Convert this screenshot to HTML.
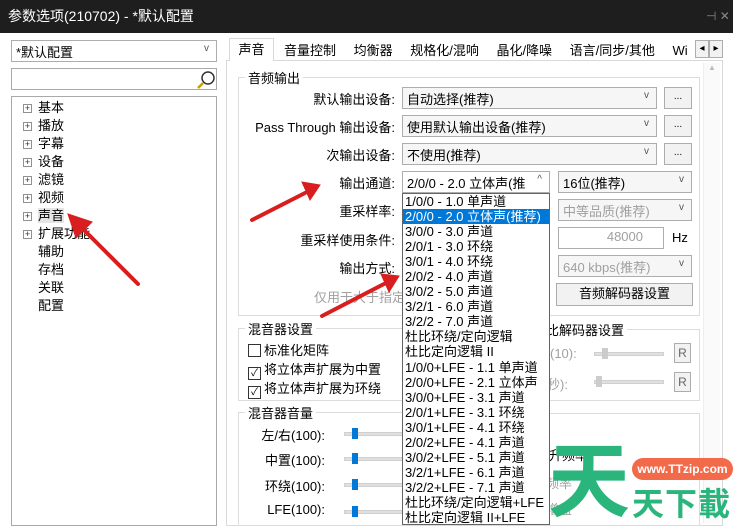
<!DOCTYPE html>
<html><head><meta charset="utf-8"><style>
*{box-sizing:border-box;margin:0;padding:0}
body{width:733px;height:525px;overflow:hidden;background:#fff;font-family:"Liberation Sans","Noto Sans CJK SC",sans-serif;font-size:13px;color:#000;position:relative}
.a{position:absolute}
.box{position:absolute;background:#fff;border:1px solid #a9a9a9}
.combo{position:absolute;background:#f6f6f6;border:1px solid #adadad;padding:1px 4px;white-space:nowrap;overflow:hidden}
.combo .v{position:absolute;right:7px;top:2px;font-size:10px;color:#555}
.btn{position:absolute;background:#f2f2f2;border:1px solid #adadad;text-align:center;font-size:10px}
.lbl{position:absolute;text-align:right;white-space:nowrap}
.grp{position:absolute;border:1px solid #dcdcdc}
.gt{position:absolute;background:#fff;padding:0 3px;top:-10px;left:6px}
.tree div{height:18px;line-height:18px;padding-left:26px;position:relative}
.tree div .p{position:absolute;left:11px;top:5px;width:9px;height:9px;border:1px solid #919191;font-size:9px;line-height:7px;text-align:center;color:#333;background:#fff}
.dd div{height:15.05px;line-height:15px;padding-left:2px;white-space:nowrap}
.dis{color:#a0a0a0}
.cb{display:inline-block;width:13px;height:13px;border:1px solid #333;vertical-align:-2px;margin-right:3px;font-size:10px;line-height:11px;text-align:center}
.trk{position:absolute;height:4px;background:#e0e0e0;border:1px solid #d0d0d0}
.th{position:absolute;width:6px;height:11px;background:#0078d7}
</style></head><body>
<div class="a" style="left:0;top:0;width:733px;height:33px;background:#1e1e1e;color:#fff;font-size:14px;line-height:33px;padding-left:8px">参数选项(210702) - *默认配置</div>
<div class="a" style="left:706px;top:9px;color:#888;font-size:12px">⊣ ✕</div>

<div class="combo" style="left:11px;top:40px;width:206px;height:22px;background:#fff">*默认配置<span class="v">v</span></div>
<div class="box" style="left:11px;top:68px;width:206px;height:22px"><svg class="a" style="left:184px;top:1px" width="20" height="20"><circle cx="12" cy="8" r="6" fill="none" stroke="#333" stroke-width="1.5"/><line x1="7" y1="13" x2="2" y2="18" stroke="#c8a000" stroke-width="2.5"/></svg></div>
<div class="box tree" style="left:11px;top:96px;width:206px;height:430px;padding-top:2px">
<div><span class="p">+</span>基本</div><div><span class="p">+</span>播放</div><div><span class="p">+</span>字幕</div><div><span class="p">+</span>设备</div><div><span class="p">+</span>滤镜</div><div><span class="p">+</span>视频</div><div><span class="p">+</span><span style="background:#e5e5e5">声音</span></div><div><span class="p">+</span>扩展功能</div><div>辅助</div><div>存档</div><div>关联</div><div>配置</div>
</div>

<div class="a" style="left:226px;top:60px;width:497px;height:466px;background:#fff;border:1px solid #d9d9d9"></div>
<div class="a" style="left:229px;top:38px;width:45px;height:23px;background:#fff;border:1px solid #d9d9d9;border-bottom:none;text-align:center;line-height:22px;font-size:13px">声音</div>
<div class="a" style="left:284px;top:40px;font-size:13px;word-spacing:14px;white-space:nowrap">音量控制 均衡器 规格化/混响 晶化/降噪 语言/同步/其他 Wi</div>
<div class="btn" style="left:695px;top:40px;width:14px;height:18px;line-height:16px">◂</div>
<div class="btn" style="left:709px;top:40px;width:14px;height:18px;line-height:16px">▸</div>
<div class="a" style="left:703px;top:63px;width:17px;height:460px;background:#fafafa;border-left:1px solid #eee"><div style="color:#bbb;font-size:8px;text-align:center">▲</div></div>

<div class="grp" style="left:238px;top:77px;width:462px;height:239px"><span class="gt">音频输出</span></div>
<div class="lbl" style="left:240px;top:89px;width:155px">默认输出设备:</div>
<div class="combo" style="left:402px;top:87px;width:255px;height:22px">自动选择(推荐)<span class="v">v</span></div>
<div class="btn" style="left:664px;top:87px;width:28px;height:22px;line-height:18px">...</div>
<div class="lbl" style="left:240px;top:117px;width:155px">Pass Through 输出设备:</div>
<div class="combo" style="left:402px;top:115px;width:255px;height:22px">使用默认输出设备(推荐)<span class="v">v</span></div>
<div class="btn" style="left:664px;top:115px;width:28px;height:22px;line-height:18px">...</div>
<div class="lbl" style="left:240px;top:145px;width:155px">次输出设备:</div>
<div class="combo" style="left:402px;top:143px;width:255px;height:22px">不使用(推荐)<span class="v">v</span></div>
<div class="btn" style="left:664px;top:143px;width:28px;height:22px;line-height:18px">...</div>
<div class="lbl" style="left:240px;top:173px;width:155px">输出通道:</div>
<div class="combo" style="left:402px;top:171px;width:148px;height:22px;background:#fff">2/0/0 - 2.0 立体声(推<span class="v">^</span></div>
<div class="combo" style="left:558px;top:171px;width:134px;height:22px">16位(推荐)<span class="v">v</span></div>
<div class="lbl" style="left:240px;top:201px;width:155px">重采样率:</div>
<div class="combo dis" style="left:558px;top:199px;width:134px;height:22px">中等品质(推荐)<span class="v">v</span></div>
<div class="lbl" style="left:240px;top:230px;width:155px">重采样使用条件:</div>
<div class="combo dis" style="left:558px;top:227px;width:106px;height:22px;background:#fff;text-align:right;padding-right:20px">48000</div>
<div class="a" style="left:672px;top:230px">Hz</div>
<div class="lbl" style="left:240px;top:258px;width:155px">输出方式:</div>
<div class="combo dis" style="left:558px;top:255px;width:134px;height:22px">640 kbps(推荐)<span class="v">v</span></div>
<div class="a dis" style="left:314px;top:287px">仅用于大于指定</div>
<div class="btn" style="left:556px;top:283px;width:137px;height:23px;font-size:13px;line-height:20px">音频解码器设置</div>

<div class="grp" style="left:238px;top:328px;width:310px;height:73px"><span class="gt">混音器设置</span></div>
<div class="a" style="left:248px;top:340px"><span class="cb"></span>标准化矩阵</div>
<div class="a" style="left:248px;top:359px"><span class="cb">✓</span>将立体声扩展为中置</div>
<div class="a" style="left:248px;top:378px"><span class="cb">✓</span>将立体声扩展为环绕</div>
<div class="grp" style="left:540px;top:329px;width:160px;height:72px"><span class="gt" style="left:2px">比解码器设置</span></div>
<div class="a dis" style="left:550px;top:346px">(10):</div>
<div class="trk" style="left:594px;top:352px;width:70px"></div><div class="th" style="left:602px;top:348px;background:#ccc"></div>
<div class="btn" style="left:674px;top:343px;width:17px;height:20px;font-size:12px;line-height:18px;color:#666">R</div>
<div class="a dis" style="left:547px;top:374px">秒):</div>
<div class="trk" style="left:594px;top:380px;width:70px"></div><div class="th" style="left:596px;top:376px;background:#ccc"></div>
<div class="btn" style="left:674px;top:372px;width:17px;height:20px;font-size:12px;line-height:18px;color:#666">R</div>

<div class="grp" style="left:238px;top:412px;width:310px;height:114px"><span class="gt">混音器音量</span></div>
<div class="grp" style="left:540px;top:413px;width:160px;height:113px"></div>
<div class="lbl" style="left:240px;top:425px;width:85px">左/右(100):</div>
<div class="lbl" style="left:240px;top:450px;width:85px">中置(100):</div>
<div class="lbl" style="left:240px;top:476px;width:85px">环绕(100):</div>
<div class="lbl" style="left:240px;top:502px;width:85px">LFE(100):</div>
<div class="trk" style="left:344px;top:432px;width:60px"></div><div class="th" style="left:352px;top:428px"></div>
<div class="trk" style="left:344px;top:457px;width:60px"></div><div class="th" style="left:352px;top:453px"></div>
<div class="trk" style="left:344px;top:483px;width:60px"></div><div class="th" style="left:352px;top:479px"></div>
<div class="trk" style="left:344px;top:510px;width:60px"></div><div class="th" style="left:352px;top:506px"></div>
<div class="a" style="left:549px;top:445px">升频率</div>
<div class="a dis" style="left:546px;top:473px">频率</div>
<div class="a dis" style="left:546px;top:499px">增益</div>

<div class="a dd" style="left:402px;top:193px;width:148px;height:332px;background:#fff;border:1px solid #646464;font-size:13px">
<div>1/0/0 - 1.0 单声道</div><div style="background:#0078d7;color:#fff">2/0/0 - 2.0 立体声(推荐)</div><div>3/0/0 - 3.0 声道</div><div>2/0/1 - 3.0 环绕</div><div>3/0/1 - 4.0 环绕</div><div>2/0/2 - 4.0 声道</div><div>3/0/2 - 5.0 声道</div><div>3/2/1 - 6.0 声道</div><div>3/2/2 - 7.0 声道</div><div>杜比环绕/定向逻辑</div><div>杜比定向逻辑 II</div><div>1/0/0+LFE - 1.1 单声道</div><div>2/0/0+LFE - 2.1 立体声</div><div>3/0/0+LFE - 3.1 声道</div><div>2/0/1+LFE - 3.1 环绕</div><div>3/0/1+LFE - 4.1 环绕</div><div>2/0/2+LFE - 4.1 声道</div><div>3/0/2+LFE - 5.1 声道</div><div>3/2/1+LFE - 6.1 声道</div><div>3/2/2+LFE - 7.1 声道</div><div>杜比环绕/定向逻辑+LFE</div><div>杜比定向逻辑 II+LFE</div>
</div>

<svg class="a" style="left:0;top:0" width="733" height="525">
<g fill="#d81e1e" stroke="#d81e1e" stroke-width="4" stroke-linecap="round">
<line x1="138" y1="284" x2="80" y2="226"/><polygon points="68,214 92,222 76,238" stroke-width="1"/>
<line x1="252" y1="220" x2="305" y2="193"/><polygon points="320,185 302,182 310,200" stroke-width="1"/>
<line x1="322" y1="316" x2="384" y2="284"/><polygon points="399,276 381,274 389,292" stroke-width="1"/>
</g></svg>

<div class="a" style="left:632px;top:458px;width:101px;height:22px;background:#f26a4a;border-radius:11px;color:#fff;font-weight:bold;font-size:12px;line-height:22px;text-align:center">www.TTzip.com</div>
<div class="a" style="left:548px;top:440px;font-size:82px;font-weight:bold;color:#2ab57d;line-height:85px">天</div>
<div class="a" style="left:632px;top:486px;font-size:32px;font-weight:bold;color:#2ab57d;line-height:36px;letter-spacing:1px">天下載</div>
</body></html>
